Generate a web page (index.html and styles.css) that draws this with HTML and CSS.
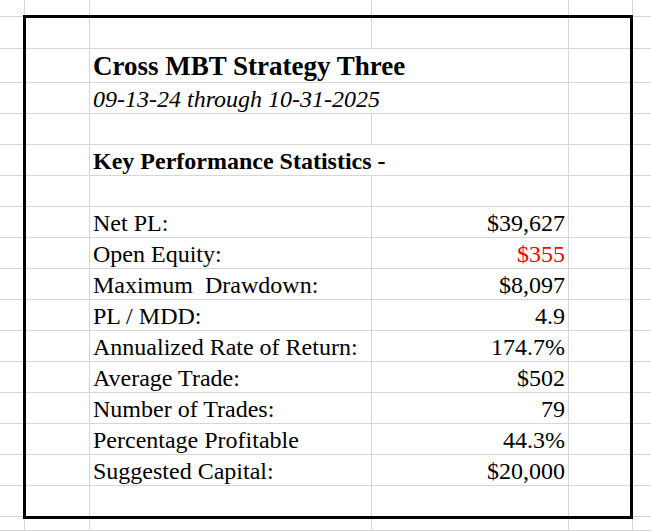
FILE: index.html
```html
<!DOCTYPE html>
<html>
<head>
<meta charset="utf-8">
<link rel="stylesheet" href="styles.css">
</head>
<body>
<div class="sheet">
  <div class="row h-top"><div class="c"></div><div class="c"></div><div class="c"></div><div class="c"></div><div class="c"></div><div class="c last"></div></div>
  <div class="row h-32"><div class="c"></div><div class="c"></div><div class="c"></div><div class="c"></div><div class="c"></div><div class="c last"></div></div>
  <div class="row h-34"><div class="c"></div><div class="c"></div><div class="c wide lbl title">Cross MBT Strategy Three</div><div class="c"></div><div class="c last"></div></div>
  <div class="row"><div class="c"></div><div class="c"></div><div class="c wide lbl sub">09-13-24 through 10-31-2025</div><div class="c"></div><div class="c last"></div></div>
  <div class="row"><div class="c"></div><div class="c"></div><div class="c"></div><div class="c"></div><div class="c"></div><div class="c last"></div></div>
  <div class="row"><div class="c"></div><div class="c"></div><div class="c wide lbl head">Key Performance Statistics -</div><div class="c"></div><div class="c last"></div></div>
  <div class="row"><div class="c"></div><div class="c"></div><div class="c"></div><div class="c"></div><div class="c"></div><div class="c last"></div></div>
  <div class="row"><div class="c"></div><div class="c"></div><div class="c lbl nb">Net PL:</div><div class="c val">$39,627</div><div class="c"></div><div class="c last"></div></div>
  <div class="row"><div class="c"></div><div class="c"></div><div class="c lbl nb">Open Equity:</div><div class="c val red">$355</div><div class="c"></div><div class="c last"></div></div>
  <div class="row"><div class="c"></div><div class="c"></div><div class="c lbl nb">Maximum&nbsp; Drawdown:</div><div class="c val">$8,097</div><div class="c"></div><div class="c last"></div></div>
  <div class="row"><div class="c"></div><div class="c"></div><div class="c lbl nb">PL / MDD:</div><div class="c val">4.9</div><div class="c"></div><div class="c last"></div></div>
  <div class="row"><div class="c"></div><div class="c"></div><div class="c lbl nb">Annualized Rate of Return:</div><div class="c val">174.7%</div><div class="c"></div><div class="c last"></div></div>
  <div class="row"><div class="c"></div><div class="c"></div><div class="c lbl nb">Average Trade:</div><div class="c val">$502</div><div class="c"></div><div class="c last"></div></div>
  <div class="row"><div class="c"></div><div class="c"></div><div class="c lbl nb">Number of Trades:</div><div class="c val">79</div><div class="c"></div><div class="c last"></div></div>
  <div class="row"><div class="c"></div><div class="c"></div><div class="c lbl nb">Percentage Profitable</div><div class="c val">44.3%</div><div class="c"></div><div class="c last"></div></div>
  <div class="row"><div class="c"></div><div class="c"></div><div class="c lbl nb">Suggested Capital:</div><div class="c val">$20,000</div><div class="c"></div><div class="c last"></div></div>
  <div class="row"><div class="c"></div><div class="c"></div><div class="c"></div><div class="c"></div><div class="c"></div><div class="c last"></div></div>
  <div class="row h-bottom"><div class="c"></div><div class="c"></div><div class="c"></div><div class="c"></div><div class="c"></div><div class="c last"></div></div>
  <div class="frame"></div>
</div>
</body>
</html>
```
FILE: styles.css
```css
html, body {
  margin: 0;
  padding: 0;
  background: #ffffff;
}

.sheet {
  position: relative;
  width: 651px;
  height: 531px;
  overflow: hidden;
  font-family: "Liberation Serif", "Times New Roman", serif;
  font-size: 24px;
  color: #000000;
}

.row {
  display: grid;
  grid-template-columns: 25px 65px 282px 197px 64px 1fr;
  height: 31px;
}

.row.h-top { height: 17px; }
.row.h-32 { height: 32px; }
.row.h-34 { height: 34px; }
.row.h-bottom { height: 14px; }

.c {
  box-sizing: border-box;
  border-right: 1px solid #d6d6d6;
  border-bottom: 1px solid #d6d6d6;
  display: flex;
  align-items: flex-end;
  white-space: nowrap;
  min-width: 0;
  line-height: 24px;
  padding-bottom: 2px;
}

.c.last { border-right: none; }

.c.wide { grid-column: span 2; }

.lbl { padding-left: 3px; }

.val {
  justify-content: flex-end;
  padding-right: 3px;
}

.red { color: #ff0000; }

.title {
  font-size: 27px;
  line-height: 27px;
  font-weight: bold;
}

.sub { font-style: italic; }

.head { font-weight: bold; }

.frame {
  position: absolute;
  left: 23px;
  top: 15px;
  width: 610px;
  height: 504px;
  box-sizing: border-box;
  border: 3px solid #000000;
}
```
